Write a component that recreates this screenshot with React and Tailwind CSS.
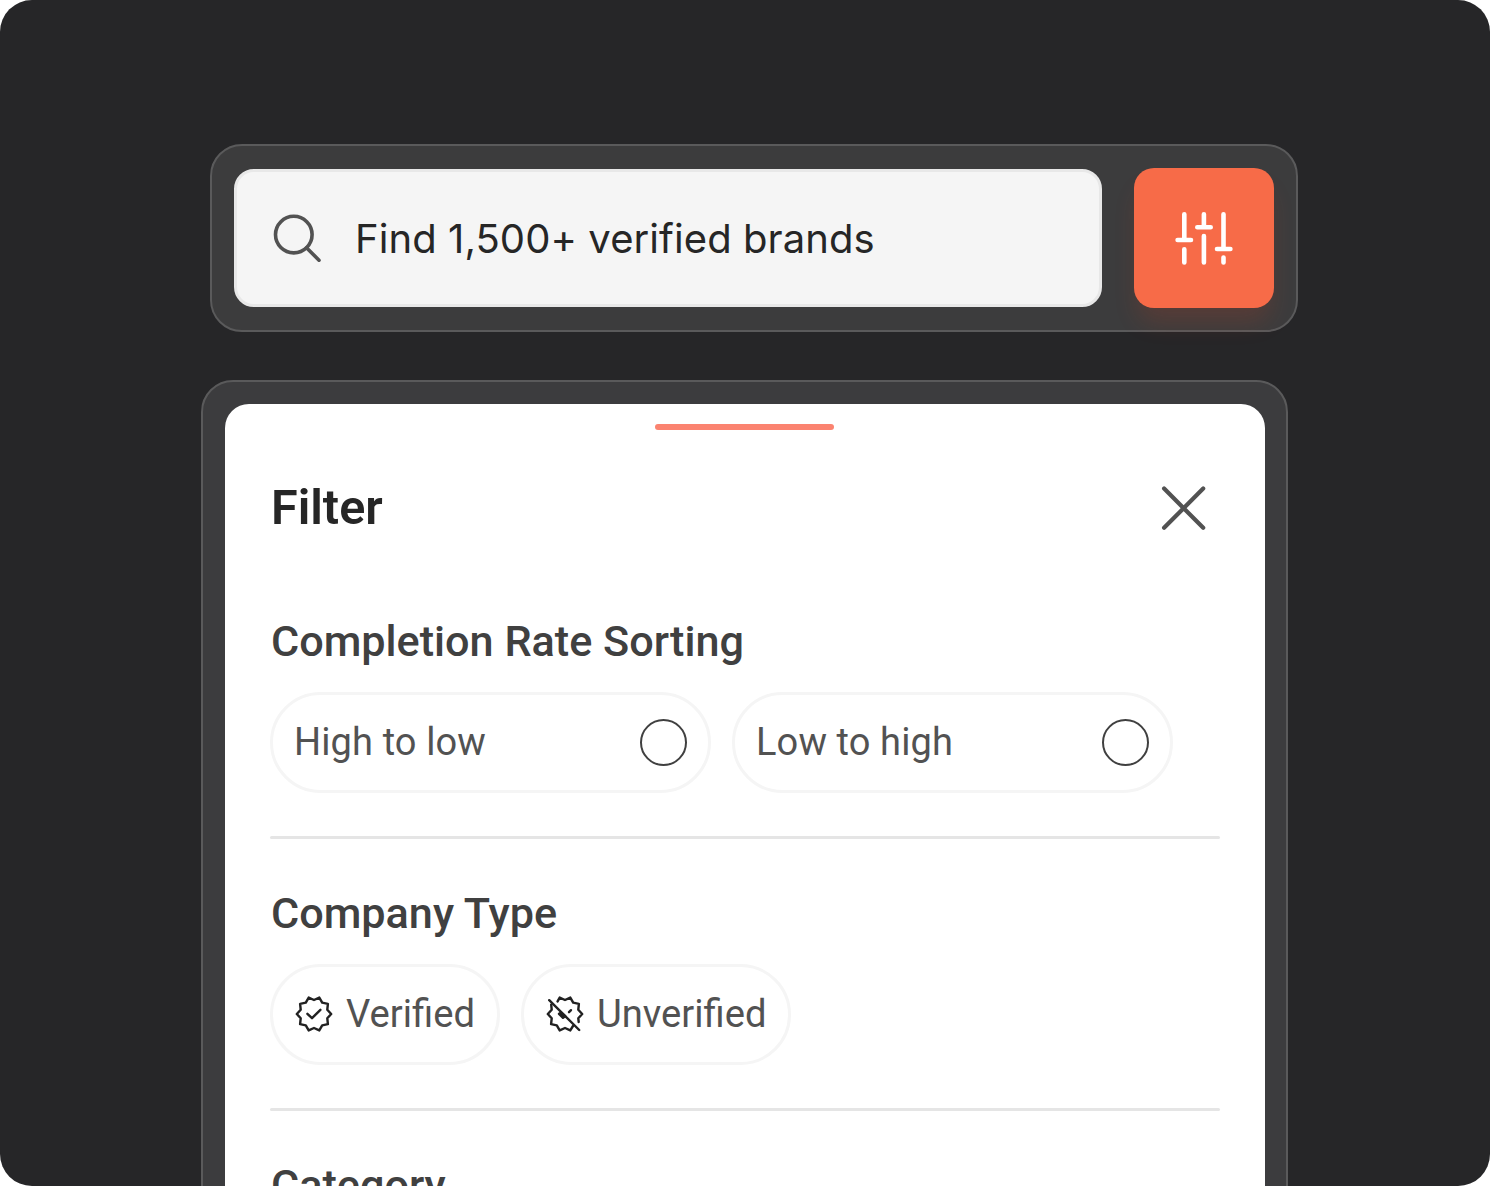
const BADGE =
  "M36.2 19 32.3 14.7 32.9 8.9 27.2 7.7 24.3 2.6 19 5 13.7 2.6 10.8 7.7 5.1 8.9 5.7 14.7 1.8 19 5.7 23.3 5.1 29.1 10.8 30.3 13.7 35.4 19 33 24.3 35.4 27.2 30.3 32.9 29.1 32.3 23.3Z";

const SearchIcon = () => (
  <svg className="size-[52px] shrink-0" viewBox="0 0 52 52" fill="none" stroke="#525252" strokeWidth="3.6" strokeLinecap="round">
    <circle cx="24.8" cy="22.6" r="18.3" />
    <path d="M37.5 35.7 50 48.2" />
  </svg>
);

const SlidersIcon = () => (
  <svg className="size-[60px]" viewBox="0 0 60 60" fill="none" stroke="#fff" strokeWidth="4.6" strokeLinecap="round">
    <path d="M10.3 6.2V32M3.6 32H17M10.3 41.3V54.4" />
    <path d="M29.9 6.2V19.3M23.3 19.3H36.7M29.9 28V54.4" />
    <path d="M49.5 6.2V41M43 41H56.4M49.5 49.6V54.4" />
  </svg>
);

const CloseIcon = () => (
  <svg className="size-12" viewBox="0 0 48 48" fill="none" stroke="#525252" strokeWidth="4.2" strokeLinecap="round">
    <path d="M4.1 4.6 43.2 43.8M43.2 4.6 4.1 43.8" />
  </svg>
);

const VerifiedIcon = () => (
  <svg className="mb-[2px] size-[38px]" viewBox="0 0 38 38" fill="none" stroke="#212121" strokeWidth="2.4" strokeLinecap="round" strokeLinejoin="round">
    <path d={BADGE} />
    <path d="M12.4 18.8 17 23.2 25.4 14.8" />
  </svg>
);

const UnverifiedIcon = () => (
  <svg className="mb-[2px] size-[38px]" viewBox="0 0 38 38" fill="none" stroke="#212121" strokeWidth="2.4" strokeLinecap="round" strokeLinejoin="round">
    <path d="M11.6 6.4 13.7 2.6 19 5 24.3 2.6 27.2 7.7 32.9 8.9 32.3 14.7 36.2 19 32.3 23.3 32.7 27" />
    <path d="M5.2 9.6 5.7 14.7 1.8 19 5.7 23.3 5.1 29.1 10.8 30.3 13.7 35.4 19 33 24.3 35.4 27 31" />
    <path d="M3.2 5.2 33.2 35" />
    <path d="M23 17.2 25 15.2" />
    <path d="M13 18.8 15.2 17.6 19.2 21.2 17 22.8Z" fill="#212121" />
  </svg>
);

function SortOption({ label }) {
  return (
    <button className="flex h-[101px] w-[441px] items-center justify-between rounded-full border-3 border-[#f5f5f5] pr-[21px] pl-[21px] text-[38px] tracking-[0.12px] text-[#525252]">
      <span>{label}</span>
      <span className="size-[47px] rounded-full border-2 border-[#404040]" />
    </button>
  );
}

function TypeOption({ icon, label, width }) {
  return (
    <button className={`flex h-[101px] items-center gap-[13px] rounded-full border-3 border-[#f5f5f5] pl-[22px] text-[38.2px] text-[#525252] ${width}`}>
      {icon}
      <span>{label}</span>
    </button>
  );
}

function Section({ title, children }) {
  return (
    <section className="h-[272px]">
      <h3 className="h-[87px] pl-px text-[43.2px] leading-[74px] font-medium text-[#404040]">{title}</h3>
      <div className="flex gap-[21px]">{children}</div>
      <div className="mt-[43px] h-[3px] w-[950px] rounded-full bg-[#e5e5e5]" />
    </section>
  );
}

export default function App() {
  return (
    <div className="bg-white">
      <main className="h-[1186px] w-[1490px] overflow-hidden rounded-[32px] bg-[#262628] pt-36 font-[Roboto,sans-serif]">
        {/* Search bar */}
        <div className="ml-[210px] flex h-[188px] w-[1088px] items-center justify-between rounded-[32px] border-2 border-[#5a5a5b] bg-[#3c3c3d] px-[22px]">
          <div className="flex h-[138px] w-[868px] items-center rounded-[20px] border-3 border-[#e8e8e8] bg-[#f5f5f5] pl-[32px]">
            <SearchIcon />
            <span className="ml-[34px] pt-px font-[Inter,sans-serif] text-[40px] tracking-[0.08px] whitespace-nowrap text-[#262626]">
              Find 1,500+ verified brands
            </span>
          </div>
          <button className="flex size-[140px] items-center justify-center rounded-[20px] bg-[#f76b48] shadow-[0_18px_24px_-4px_rgba(248,60,20,0.15)]">
            <SlidersIcon />
          </button>
        </div>

        {/* Filter sheet */}
        <div className="mt-12 ml-[201px] h-[900px] w-[1087px] rounded-t-[32px] border-2 border-[#5a5a5b] bg-[#3c3c3e] pt-[22px] pr-[21px] pl-[22px]">
          <div className="h-full rounded-t-[24px] bg-white pt-5">
            <div className="mr-auto ml-[430px] h-1.5 w-[179px] rounded-full bg-[#fb8370]" />
            <div className="flex h-[175px] items-start justify-between pt-[50px] pr-[57px] pl-[46px]">
              <h2 className="text-[48.5px] leading-[56px] font-semibold text-[#262626]">Filter</h2>
              <div className="pt-1">
                <CloseIcon />
              </div>
            </div>

            <div className="pl-[45px]">
              <Section title="Completion Rate Sorting">
                <SortOption label="High to low" />
                <SortOption label="Low to high" />
              </Section>
              <Section title="Company Type">
                <TypeOption icon={<VerifiedIcon />} label="Verified" width="w-[230px]" />
                <TypeOption icon={<UnverifiedIcon />} label="Unverified" width="w-[270px]" />
              </Section>
              <Section title="Category" />
            </div>
          </div>
        </div>
      </main>
    </div>
  );
}
